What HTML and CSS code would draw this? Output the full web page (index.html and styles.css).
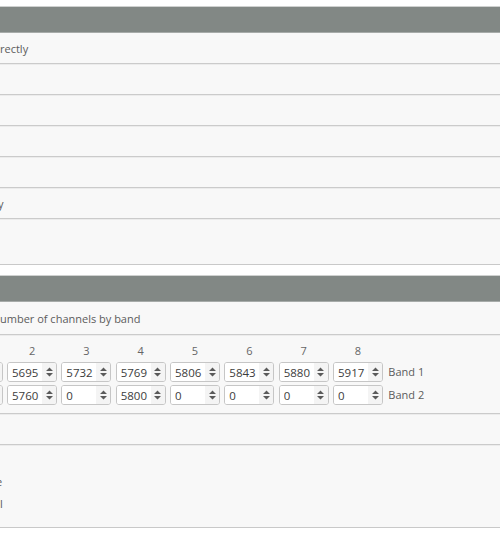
FILE: index.html
```html
<!DOCTYPE html>
<html lang="en">
<head>
    <meta charset="UTF-8">
    <meta name="viewport" content="width=device-width, initial-scale=1.0">
    <title>VTX table</title>
    <link rel="stylesheet" href="styles.css">
</head>
<body>
    <div class="box">
        <div class="box-title"></div>
        <div class="row"><span class="label">rectly</span></div>
        <div class="row"></div>
        <div class="row"></div>
        <div class="row"></div>
        <div class="row"></div>
        <div class="row"><span class="label cut">y</span></div>
        <div class="row row-tall"></div>
    </div>

    <div class="box">
        <div class="box-title"></div>
        <div class="row row-mid"><span class="label">umber of channels by band</span></div>
        <div class="row row-table">
            <div class="freq-table">
                <span class="col-num"></span>
                <span class="col-num">2</span>
                <span class="col-num">3</span>
                <span class="col-num">4</span>
                <span class="col-num">5</span>
                <span class="col-num">6</span>
                <span class="col-num">7</span>
                <span class="col-num">8</span>
                <span></span>

                <label class="num"><input type="number" value="5658"><span class="spin"><svg width="7" height="12" viewBox="0 0 7 12"><path d="M0 5L3.5 1.5L7 5Z M0 7L3.5 10.5L7 7Z"/></svg></span></label>
                <label class="num"><input type="number" value="5695"><span class="spin"><svg width="7" height="12" viewBox="0 0 7 12"><path d="M0 5L3.5 1.5L7 5Z M0 7L3.5 10.5L7 7Z"/></svg></span></label>
                <label class="num"><input type="number" value="5732"><span class="spin"><svg width="7" height="12" viewBox="0 0 7 12"><path d="M0 5L3.5 1.5L7 5Z M0 7L3.5 10.5L7 7Z"/></svg></span></label>
                <label class="num"><input type="number" value="5769"><span class="spin"><svg width="7" height="12" viewBox="0 0 7 12"><path d="M0 5L3.5 1.5L7 5Z M0 7L3.5 10.5L7 7Z"/></svg></span></label>
                <label class="num"><input type="number" value="5806"><span class="spin"><svg width="7" height="12" viewBox="0 0 7 12"><path d="M0 5L3.5 1.5L7 5Z M0 7L3.5 10.5L7 7Z"/></svg></span></label>
                <label class="num"><input type="number" value="5843"><span class="spin"><svg width="7" height="12" viewBox="0 0 7 12"><path d="M0 5L3.5 1.5L7 5Z M0 7L3.5 10.5L7 7Z"/></svg></span></label>
                <label class="num"><input type="number" value="5880"><span class="spin"><svg width="7" height="12" viewBox="0 0 7 12"><path d="M0 5L3.5 1.5L7 5Z M0 7L3.5 10.5L7 7Z"/></svg></span></label>
                <label class="num"><input type="number" value="5917"><span class="spin"><svg width="7" height="12" viewBox="0 0 7 12"><path d="M0 5L3.5 1.5L7 5Z M0 7L3.5 10.5L7 7Z"/></svg></span></label>
                <span class="band-name">Band 1</span>

                <label class="num"><input type="number" value="5740"><span class="spin"><svg width="7" height="12" viewBox="0 0 7 12"><path d="M0 5L3.5 1.5L7 5Z M0 7L3.5 10.5L7 7Z"/></svg></span></label>
                <label class="num"><input type="number" value="5760"><span class="spin"><svg width="7" height="12" viewBox="0 0 7 12"><path d="M0 5L3.5 1.5L7 5Z M0 7L3.5 10.5L7 7Z"/></svg></span></label>
                <label class="num"><input type="number" value="0"><span class="spin"><svg width="7" height="12" viewBox="0 0 7 12"><path d="M0 5L3.5 1.5L7 5Z M0 7L3.5 10.5L7 7Z"/></svg></span></label>
                <label class="num"><input type="number" value="5800"><span class="spin"><svg width="7" height="12" viewBox="0 0 7 12"><path d="M0 5L3.5 1.5L7 5Z M0 7L3.5 10.5L7 7Z"/></svg></span></label>
                <label class="num"><input type="number" value="0"><span class="spin"><svg width="7" height="12" viewBox="0 0 7 12"><path d="M0 5L3.5 1.5L7 5Z M0 7L3.5 10.5L7 7Z"/></svg></span></label>
                <label class="num"><input type="number" value="0"><span class="spin"><svg width="7" height="12" viewBox="0 0 7 12"><path d="M0 5L3.5 1.5L7 5Z M0 7L3.5 10.5L7 7Z"/></svg></span></label>
                <label class="num"><input type="number" value="0"><span class="spin"><svg width="7" height="12" viewBox="0 0 7 12"><path d="M0 5L3.5 1.5L7 5Z M0 7L3.5 10.5L7 7Z"/></svg></span></label>
                <label class="num"><input type="number" value="0"><span class="spin"><svg width="7" height="12" viewBox="0 0 7 12"><path d="M0 5L3.5 1.5L7 5Z M0 7L3.5 10.5L7 7Z"/></svg></span></label>
                <span class="band-name">Band 2</span>
            </div>
        </div>
        <div class="row"></div>
        <div class="row row-notes">
            <span class="label cut-more">e</span>
            <span class="label">l</span>
        </div>
    </div>
</body>
</html>
```

FILE: styles.css
```css
body {
    margin: 0;
    padding-top: 6px;
    font-family: 'Open Sans', sans-serif;
    font-size: 11px;
    color: #5c5c5c;
    background: #fff;
    overflow: hidden;
}
.box {
    background: #f8f8f8;
    border-top: 1px solid #cfd1d0;
    border-bottom: 1px solid #c9c9c9;
    margin-bottom: 10px;
}
.box-title {
    height: 25px;
    background: #828885;
    border-bottom: 1px solid #a7aba9;
}
.row {
    height: 30px;
    display: flex;
    align-items: center;
    border-bottom: 1px solid #cbcbcb;
    box-shadow: 0 1px 0 #ececec;
}
.row:last-child {
    border-bottom: none;
    box-shadow: none;
}
.row-tall { height: 45px; }
.row-mid { height: 32px; }
.row-table { height: 78px; align-items: flex-start; }
.row-notes {
    height: 82px;
    flex-direction: column;
    align-items: flex-start;
    justify-content: flex-start;
    padding-top: 26px;
    box-sizing: border-box;
}
.row-notes .label { line-height: 22px; }
.label { white-space: nowrap; }
.cut { margin-left: -2px; }
.cut-more { margin-left: -4px; }

.freq-table {
    display: grid;
    grid-template-columns: repeat(8, 50px) auto;
    column-gap: 4.33px;
    row-gap: 3px;
    margin-left: -47.3px;
    padding-top: 8px;
}
.col-num {
    height: 16px;
    line-height: 16px;
    text-align: center;
    color: #666;
}
.num {
    display: flex;
    height: 20px;
    box-sizing: border-box;
    border: 1px solid #c6c6c6;
    border-radius: 3px;
    background: #fff;
    overflow: hidden;
}
.num input {
    flex: 1;
    min-width: 0;
    border: none;
    padding: 0 0 0 4px;
    font-family: 'Open Sans', sans-serif;
    font-size: 11.5px;
    color: #3c3c3c;
    background: #fff;
    outline: none;
    -moz-appearance: textfield;
}
.num input::-webkit-inner-spin-button,
.num input::-webkit-outer-spin-button {
    -webkit-appearance: none;
    margin: 0;
}
.spin {
    width: 14px;
    display: flex;
    align-items: center;
    justify-content: center;
    background: #f4f4f4;
}
.spin svg { fill: #5a5a5a; }
.band-name {
    line-height: 20px;
    padding-left: 1px;
    color: #5c5c5c;
}
```
